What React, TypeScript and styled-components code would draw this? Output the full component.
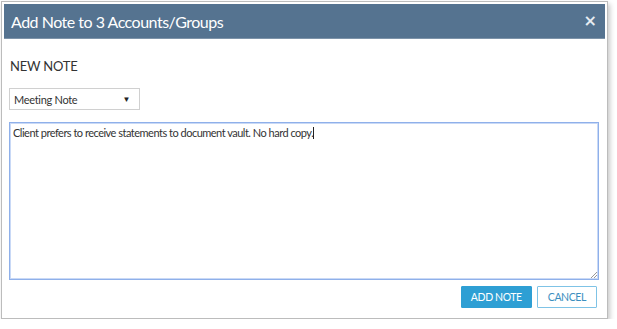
import React from "react"
import styled, { createGlobalStyle } from "styled-components"

const GlobalStyle = createGlobalStyle`
    body {
        margin: 0;
        background: #ffffff;
        font-family: Lato, "Open Sans", sans-serif;
    }
`

const Page = styled.div`
    padding: 1px 0 0 1px;
`

const Dialog = styled.div`
    width: 601px;
    height: 312px;
    border: 1px solid #bcbcbc;
    padding: 2px;
    background: #ffffff;
    box-shadow: 2px 3px 5px rgba(0, 0, 0, 0.22);
    display: flex;
    flex-direction: column;
`

const Header = styled.div`
    height: 34px;
    flex-shrink: 0;
    background: #557390;
    border-bottom: 1px solid #7d93a9;
    display: flex;
    align-items: center;
    justify-content: space-between;
    padding: 0 8px 0 7px;
`

const Title = styled.h1`
    margin: 0;
    font-size: 16px;
    font-weight: 400;
    letter-spacing: -0.5px;
    color: #ffffff;
`

const Close = styled.span`
    color: #e6ecf2;
    font-family: "DejaVu Sans", sans-serif;
    font-size: 16px;
    font-weight: 700;
    line-height: 1;
`

const Body = styled.div`
    flex: 1;
    display: flex;
    flex-direction: column;
    padding: 19px 6px 0 5px;
`

const SectionTitle = styled.h2`
    margin: 0 0 14px 1px;
    font-size: 13px;
    font-weight: 400;
    letter-spacing: -0.2px;
    line-height: 16px;
    color: #333333;
`

const Select = styled.div`
    box-sizing: border-box;
    flex-shrink: 0;
    width: 131px;
    height: 22px;
    border: 1px solid #d0d0d0;
    display: flex;
    align-items: center;
    justify-content: space-between;
    padding: 0 9px 0 4px;
    font-size: 11px;
    letter-spacing: -0.3px;
    color: #333333;
    margin-bottom: 12px;
`

const Caret = styled.span`
    font-size: 8px;
    color: #222222;
`

const NoteArea = styled.div`
    box-sizing: border-box;
    flex-shrink: 0;
    height: 158px;
    border: 1px solid #8fb0ea;
    box-shadow: inset 0 0 0 1px #c9d9f6;
    padding: 3px 3px;
    font-size: 11px;
    letter-spacing: -0.5px;
    color: #333333;
    position: relative;
`

const Cursor = styled.span`
    display: inline-block;
    width: 1px;
    height: 12px;
    background: #222222;
    vertical-align: -2px;
`

const Grip = styled.svg`
    position: absolute;
    right: 1px;
    bottom: 1px;
`

const Actions = styled.div`
    display: flex;
    justify-content: flex-end;
    gap: 5px;
    margin-top: 6px;
    padding-right: 2px;
`

const Button = styled.button<{ $primary?: boolean }>`
    height: 22px;
    box-sizing: border-box;
    padding: 0 ${(p) => (p.$primary ? "9px" : "10px")};
    font-family: Lato, "Open Sans", sans-serif;
    font-size: 10.5px;
    letter-spacing: -0.4px;
    border-radius: 1px;
    border: 1px solid ${(p) => (p.$primary ? "#2e9fd4" : "#7fc3e6")};
    background: ${(p) => (p.$primary ? "#2e9fd4" : "#ffffff")};
    color: ${(p) => (p.$primary ? "#ffffff" : "#3b8fc0")};
`

export default function App() {
    return (
        <Page>
            <GlobalStyle />
            <Dialog>
                <Header>
                    <Title>Add Note to 3 Accounts/Groups</Title>
                    <Close>×</Close>
                </Header>
                <Body>
                    <SectionTitle>NEW NOTE</SectionTitle>
                    <Select>
                        Meeting Note
                        <Caret>▼</Caret>
                    </Select>
                    <NoteArea>
                        Client prefers to receive statements to document vault. No hard copy.<Cursor />
                        <Grip width="7" height="7" viewBox="0 0 7 7">
                            <path d="M7 1 L1 7 M7 4 L4 7" stroke="#999" strokeWidth="1" />
                        </Grip>
                    </NoteArea>
                    <Actions>
                        <Button $primary>ADD NOTE</Button>
                        <Button>CANCEL</Button>
                    </Actions>
                </Body>
            </Dialog>
        </Page>
    )
}
